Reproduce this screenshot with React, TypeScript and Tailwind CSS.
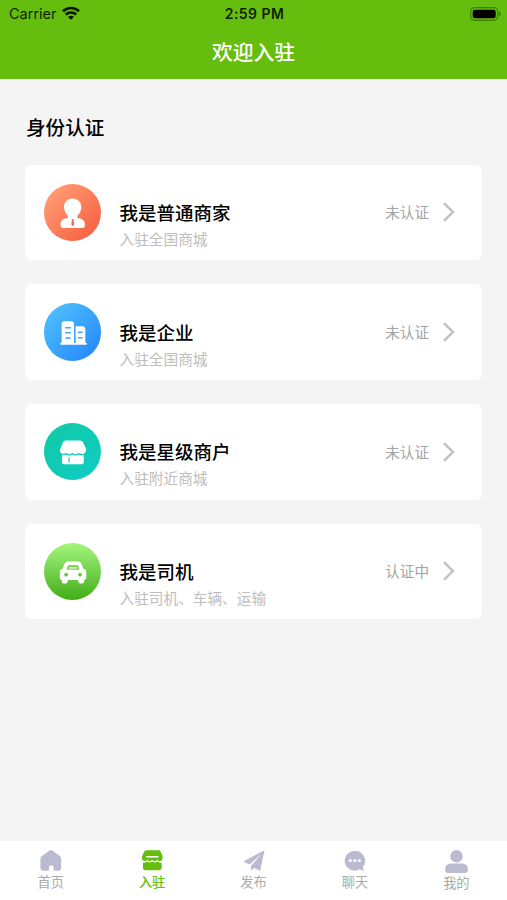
import React, { useState } from 'react';

interface Role {
  title: string;
  desc: string;
  status: string;
  circle: string;
  icon: React.ReactNode;
}

const MerchantIcon = () => (
  <svg viewBox="0 0 58 58" className="h-full w-full" fill="#fff">
    <path d="M28.900 14.500c-5.300 0-8.700 3.700-8.700 8.500 0 4.200 1.800 7.200 4 9.100v2.300c-4.300.5-7.500 2.200-7.500 6v1.300q0 2.600 2.700 2.600h19.100q2.700 0 2.700-2.600v-1.300c0-3.800-3.300-5.500-7.600-6v-2.300c2.200-1.900 4-4.900 4-9.100 0-4.800-3.400-8.500-8.700-8.500z" />
    <path d="M27.800 35.600h2.500l-.4 1.500.6 3.800-1.500 1.600-1.500-1.600.6-3.800z" fill="#f8674a" />
  </svg>
);

const CompanyIcon = () => (
  <svg viewBox="0 0 58 58" className="h-full w-full">
    <path d="M17.800 40.500V21.200q0-2.900 2.900-2.900h6.700q2.900 0 2.900 2.900v19.300zM31.900 40.500V23.400h6.800q3 0 3 3v14.100z" fill="#fff" />
    <path d="M16.400 40.200h26.700v1.900H16.400z" fill="#fff" />
    <path d="M22 24.900h4.500M22 30h4.500M22 35.200h4.500M34.700 29.600h3.700M34.700 35h3.700" stroke="#42a5fb" strokeWidth="1.500" strokeLinecap="round" />
  </svg>
);

const StoreIcon = () => (
  <svg viewBox="0 0 58 58" className="h-full w-full" fill="#fff">
    <path d="M21.800 17.700h14.500q2.200 0 3.100 1.900l2.900 6.200c.8 2.600-1 5.400-3.600 5.400-1.700 0-2.900-.4-3.600-1.200-.8.900-2 1.400-3.300 1.400s-2.400-.5-3.100-1.400c-.8.900-1.900 1.400-3.200 1.400-1.400 0-2.500-.5-3.200-1.400-.7.800-1.900 1.200-3 1.200-2.500 0-3.700-2.700-2.900-5.200l2.700-6.400q.8-1.900 2.700-1.900z" />
    <path d="M18.200 32.300c1.600 0 2.900-.1 4-.6 1.800 1.400 4.600 1.400 6.400 0 1.900 1.400 4.600 1.400 6.400 0 1.300.7 3 .9 5.100.6v7.200q0 2.100-2.100 2.100H20.300q-2.100 0-2.100-2.100z" />
    <path d="M25.300 34.500v5" stroke="#11cbb3" strokeWidth="1.200" />
  </svg>
);

const CarIcon = () => (
  <svg viewBox="0 0 58 58" className="h-full w-full">
    <path
      d="M24.300 18.700h9.800c2 0 3.200.9 3.900 2.700l1.800 4.500c1.700.3 2.800 1.500 2.800 3.100v6c0 1.300-.8 2.200-2.100 2.400v1.500q0 2-2 2h-1.700q-1.500 0-2-1.600l-.6-1.900H24.300l-.6 1.900q-.5 1.600-2 1.600H20q-2 0-2-2v-1.500c-1.300-.2-2-1.100-2-2.400v-6c0-1.600 1-2.800 2.700-3.100l1.800-4.500c.7-1.800 1.900-2.700 3.800-2.700z"
      fill="#fff"
    />
    <path d="M24.800 22.400h9q.7 0 .9.700l.9 4H22.900l1-4q.2-.7.900-.7z" fill="#76d046" />
    <path d="M25.800 25.100h7" stroke="#fff" strokeWidth="1.300" strokeLinecap="round" />
    <circle cx="22.300" cy="32" r="1.900" fill="#67c735" />
    <circle cx="36.300" cy="32" r="1.900" fill="#67c735" />
  </svg>
);

const roles: Role[] = [
  {
    title: '我是普通商家',
    desc: '入驻全国商城',
    status: '未认证',
    circle: 'bg-linear-to-br from-[#ffa27a] to-[#f6573b]',
    icon: <MerchantIcon />,
  },
  {
    title: '我是企业',
    desc: '入驻全国商城',
    status: '未认证',
    circle: 'bg-linear-to-br from-[#54c5fc] to-[#2482fa]',
    icon: <CompanyIcon />,
  },
  {
    title: '我是星级商户',
    desc: '入驻附近商城',
    status: '未认证',
    circle: 'bg-linear-to-br from-[#12c8a6] to-[#10cdc5]',
    icon: <StoreIcon />,
  },
  {
    title: '我是司机',
    desc: '入驻司机、车辆、运输',
    status: '认证中',
    circle: 'bg-linear-to-b from-[#a4f67b] to-[#40ad0d]',
    icon: <CarIcon />,
  },
];

const tabs = [
  {
    label: '首页',
    icon: <path d="M10.600 1.700q1.800-1.400 3.600 0l7.400 5.700q1.500 1.200 1.500 3v9.400q0 2.900-2.900 2.900h-4.900v-3.300a2.500 2.500 0 0 0-5 0v3.300H4.400q-2.900 0-2.900-2.900v-9.400q0-1.800 1.500-3z" />,
  },
  {
    label: '入驻',
    icon: (
      <>
        <path d="M5.700 1.300h12.500q1.700 0 2.400 1.500l1.800 4.500c.9 3-.8 5.300-2.700 5.300-1.500 0-2.400-.6-3-1.500-.8 1-1.800 1.500-2.700 1.500s-1.700-.6-2.200-1.500c-.7.9-1.600 1.500-2.600 1.500s-1.900-.6-2.500-1.500c-.7.900-1.500 1.500-2.500 1.500-2.200 0-3.800-2.500-3.100-5.100L3.300 2.800Q4 1.300 5.700 1.300z" />
        <path d="M2 14.400c1.700 0 3.200-.4 4.600-1.300 1.700 1.200 3.700 1.200 5.200 0 1.600 1.200 3.700 1.200 5.300 0 1.300.9 2.700 1.300 4.500 1.300v5.500q0 2.200-2.200 2.200H4.200q-2.200 0-2.200-2.200z" />
        <path d="M6.100 8h11.600" stroke="#fff" strokeWidth="1.600" strokeLinecap="round" />
      </>
    ),
  },
  {
    label: '发布',
    icon: <path d="M23.500 1.200L1.300 13.100l6.600 3.100L20.200 5.200 9.500 17.600v5l3.100-2.700 6.400 2.900z" />,
  },
  {
    label: '聊天',
    icon: (
      <>
        <path d="M12 2a10.300 10.300 0 1 0 5.300 19.200c1.700 1 3.300 1.400 5.200 1.300-1.200-.9-1.700-2.200-1.700-3.800A10.300 10.300 0 0 0 12 2z" />
        <circle cx="7.600" cy="12" r="1.600" fill="#fff" />
        <circle cx="12.300" cy="12" r="1.600" fill="#fff" />
        <circle cx="17" cy="12" r="1.600" fill="#fff" />
      </>
    ),
  },
  {
    label: '我的',
    icon: (
      <>
        <circle cx="12" cy="6.600" r="6.500" />
        <path d="M6.500 14.100h11c3.900 0 6.300 2.400 6.300 5.700v1.700q0 2.500-2.500 2.500H2.700Q.2 24 .2 21.500v-1.700c0-3.300 2.400-5.700 6.300-5.700z" />
      </>
    ),
  },
];

const StatusBar = () => (
  <div className="flex h-7 items-center text-black/85">
    <div className="flex flex-1 items-center gap-[6px] pl-[9px]">
      <span className="font-['Inter',sans-serif] text-[14.500px] leading-7">Carrier</span>
      <svg width="18" height="14" viewBox="0 0 18 14" fill="none" stroke="#071300" strokeWidth="2.700" className="-ml-px -mt-[2px]">
        <path d="M1 5.200C5.600.9 12.400.9 17 5.200" />
        <path d="M3.800 8.500c2.900-2.700 7.500-2.700 10.400 0" />
        <path d="M6.100 10.900c1.600-1.400 4.200-1.400 5.800 0L9 13.700z" fill="#071300" stroke="none" />
      </svg>
    </div>
    <span className="pr-px font-['Inter',sans-serif] text-[14px] font-semibold leading-7 tracking-[0.450px]">2:59 PM</span>
    <div className="flex flex-1 justify-end pr-[6px]">
      <svg width="31" height="14" viewBox="0 0 31 14" className="-mt-px">
        <rect x="0.700" y="0.700" width="27" height="12.600" rx="4" fill="none" stroke="#3d7d07" strokeWidth="1.200" />
        <rect x="2.700" y="2.700" width="23" height="8.600" rx="2.200" fill="#000" />
        <path d="M29 4.800c1.300.4 2 1.200 2 2.200s-.7 1.800-2 2.200z" fill="#3d7d07" />
      </svg>
    </div>
  </div>
);

const RoleCard: React.FC<{ role: Role }> = ({ role }) => (
  <button className="flex h-[95.700px] w-full items-center rounded-[7px] bg-white pl-[18.500px] pr-[27px] text-left">
    <div className={`h-[57.500px] w-[57.500px] shrink-0 rounded-full ${role.circle}`}>{role.icon}</div>
    <div className="ml-[18.500px] flex-1 pt-[24px]">
      <div className="text-[18.500px] font-medium leading-[28px] text-black">{role.title}</div>
      <div className="text-[14.660px] leading-[25px] text-[#bdbdbd]">{role.desc}</div>
    </div>
    <span className="text-[14.600px] text-[#a3a3a3]">{role.status}</span>
    <svg width="12" height="20" viewBox="0 0 12 20" fill="none" stroke="#c3c3c3" strokeWidth="2.500" className="ml-[14px]">
      <path d="M1 1.200L10 10 1 18.800" />
    </svg>
  </button>
);

const App: React.FC = () => {
  const [activeTab, setActiveTab] = useState(1);

  return (
    <div className="flex h-[900px] w-[507px] flex-col overflow-hidden bg-[#f4f4f4] font-['Noto_Sans_CJK_SC',sans-serif]">
      <header className="h-[79px] shrink-0 bg-[#65bd0d]">
        <StatusBar />
        <h1 className="text-center text-[20.800px] font-medium leading-[47px] text-white">欢迎入驻</h1>
      </header>

      <main className="flex-1 px-[25px] pt-[34px]">
        <h2 className="pl-px text-[19.600px] font-medium leading-[28px] text-black">身份认证</h2>
        <div className="mt-[23.500px] flex flex-col gap-[24px]">
          {roles.map((role) => (
            <RoleCard key={role.title} role={role} />
          ))}
        </div>
      </main>

      {/* Bottom tabs */}
      <nav className="flex h-[59px] shrink-0 bg-white">
        {tabs.map((tab, i) => (
          <button
            key={tab.label}
            onClick={() => setActiveTab(i)}
            className="flex flex-1 flex-col items-center pt-[8px] last:pt-[8.500px]"
          >
            <svg
              viewBox="0 0 24 24"
              className={`h-[23px] w-[23px] ${activeTab === i ? 'fill-[#65bd0d]' : 'fill-[#babad0]'}`}
            >
              {tab.icon}
            </svg>
            <span className={`text-[13.200px] leading-[20px] ${activeTab === i ? 'font-medium text-[#65bd0d]' : 'text-[#aaa]'}`}>
              {tab.label}
            </span>
          </button>
        ))}
      </nav>
    </div>
  );
};

export default App;
